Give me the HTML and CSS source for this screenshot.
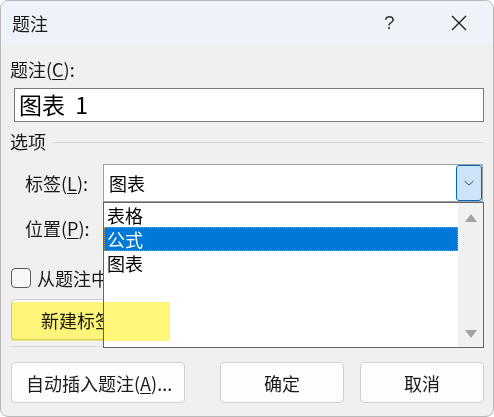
FILE: index.html
```html
<!DOCTYPE html>
<html lang="zh">
<head>
<meta charset="utf-8">
<link rel="stylesheet" href="styles.css">
</head>
<body>
<div class="window">
  <div class="titlebar">
    <span class="title">题注</span>
    <span class="help">?</span>
    <span class="close">
      <svg width="16" height="16" viewBox="0 0 16 16"><path d="M1 1 L15 15 M15 1 L1 15" stroke="#1a1a1a" stroke-width="1.3" fill="none"/></svg>
    </span>
  </div>
  <div class="content">
    <div class="label-caption">题注(<u>C</u>):</div>
    <div class="caption-input">图表&nbsp;&nbsp;1</div>
    <div class="group-head"><span>选项</span><span class="rule"></span></div>
    <div class="field-row">
      <span class="field-label">标签(<u>L</u>):</span>
      <div class="combo">
        <span class="combo-text">图表</span>
        <span class="combo-btn">
          <svg width="12" height="8" viewBox="0 0 12 8"><path d="M1.5 2 L6 6 L10.5 2" stroke="#505050" stroke-width="1" fill="none"/></svg>
        </span>
      </div>
    </div>
    <div class="field-row second">
      <span class="field-label">位置(<u>P</u>):</span>
      <div class="combo"></div>
    </div>
    <div class="check-row">
      <span class="checkbox"></span>
      <span>从题注中排除标签(<u>E</u>)</span>
    </div>
    <div class="btn-row">
      <button class="btn new-label">新建标签(<u>N</u>)...</button>
    </div>
    <div class="sep"></div>
    <div class="footer">
      <button class="btn auto">自动插入题注(<u>A</u>)...</button>
      <button class="btn ok">确定</button>
      <button class="btn cancel">取消</button>
    </div>
    <div class="dropdown">
      <div class="items">
        <div class="item">表格</div>
        <div class="item selected">公式</div>
        <div class="item">图表</div>
      </div>
      <div class="scrollbar">
        <span class="arrow up"></span>
        <span class="arrow down"></span>
      </div>
    </div>
    <span class="highlight"></span>
  </div>
</div>
</body>
</html>
```
FILE: styles.css
```css
* { box-sizing: border-box; }
html, body { margin: 0; padding: 0; background: #ffffff; }
body {
  font-family: "Noto Sans CJK SC", "Noto Sans", sans-serif;
  color: #1a1a1a;
}
.window {
  width: 494px;
  height: 417px;
  border: 1px solid #b9b9b9;
  border-radius: 8px;
  overflow: hidden;
  background: #f0f0f0;
  position: relative;
}
.titlebar {
  height: 43px;
  background: #eef2f9;
  display: flex;
  align-items: center;
  font-size: 18px;
}
.title { margin-left: 11px; flex: 1; }
.help { width: 20px; margin-right: 47px; font-family: "Liberation Sans", sans-serif; font-size: 19px; color: #333; }
.close { margin-right: 26px; display: flex; }
.content {
  padding: 0 9px;
  font-size: 18px;
}
.content u { text-decoration-thickness: 1px; text-underline-offset: 2px; }
.label-caption { margin-top: 14px; height: 22px; line-height: 22px; }
.caption-input {
  margin: 8px 0 0 4px;
  width: 470px;
  height: 34px;
  border: 1px solid #7a7a7a;
  background: #fff;
  font-size: 23px;
  line-height: 31px;
  padding-left: 4px;
  color: #000;
}
.group-head {
  margin-top: 8px;
  display: flex;
  align-items: center;
  height: 22px;
  line-height: 22px;
}
.group-head .rule { flex: 1; height: 1px; background: #d9d9d9; margin: 2px 0 0 6px; }
.field-row {
  margin-top: 12px;
  display: flex;
  align-items: center;
  height: 38px;
}
.field-row.second { margin-top: 7px; }
.field-label { width: 78px; margin-left: 15px; }
.combo {
  width: 380px;
  height: 38px;
  border: 1px solid #a0a0a0;
  background: #fff;
  display: flex;
  align-items: center;
  padding-left: 5px;
  position: relative;
}
.combo-text { flex: 1; color: #000; }
.combo-btn {
  width: 26px;
  height: 36px;
  background: #cce4f7;
  border: 1px solid #0067c0;
  border-radius: 3px;
  display: flex;
  align-items: center;
  justify-content: center;
}
.check-row {
  margin-top: 20px;
  display: flex;
  align-items: center;
  height: 22px;
}
.checkbox {
  width: 20px;
  height: 20px;
  border: 1px solid #5a5a5a;
  border-radius: 4px;
  background: #f7f7f7;
  margin: 0 6px 0 1px;
}
.btn-row { margin-top: 10px; height: 42px; }
.btn {
  font-family: inherit;
  font-size: 18px;
  color: #1a1a1a;
  background: #fdfdfd;
  border: 1px solid #d0d0d0;
  border-radius: 4px;
  height: 41px;
  padding: 0;
}
.new-label { width: 160px; margin-left: 1px; text-align: left; padding-left: 29px; }
.highlight {
  position: absolute;
  left: 10px;
  top: 301px;
  width: 159px;
  height: 39px;
  background: #fff77a;
  mix-blend-mode: multiply;
  z-index: 2;
}
.sep { height: 1px; background: #d9d9d9; margin: 5px 0 0 1px; width: 380px; }
.footer {
  margin-top: 15px;
  display: flex;
  padding-left: 1px;
}
.auto { width: 174px; text-align: left; padding-left: 14px; }
.ok { width: 124px; margin-left: 35px; }
.cancel { width: 124px; margin-left: 16px; }
.dropdown {
  position: absolute;
  left: 102px;
  top: 201px;
  width: 381px;
  height: 146px;
  border: 1px solid #646464;
  background: #fff;
  display: flex;
  z-index: 1;
}
.items { flex: 1; }
.item {
  height: 24px;
  line-height: 24px;
  padding-left: 3px;
  color: #000;
}
.item.selected {
  background: #0078d7;
  color: #fff;
  outline: 1px dotted #f08a24;
  outline-offset: -1px;
}
.scrollbar {
  width: 25px;
  background: #f0f0f0;
  position: relative;
}
.arrow {
  position: absolute;
  left: 7px;
  width: 0;
  height: 0;
  border-left: 6px solid transparent;
  border-right: 6px solid transparent;
}
.arrow.up { top: 11px; border-bottom: 8px solid #a3a3a3; }
.arrow.down { bottom: 9px; border-top: 8px solid #a3a3a3; }
```
